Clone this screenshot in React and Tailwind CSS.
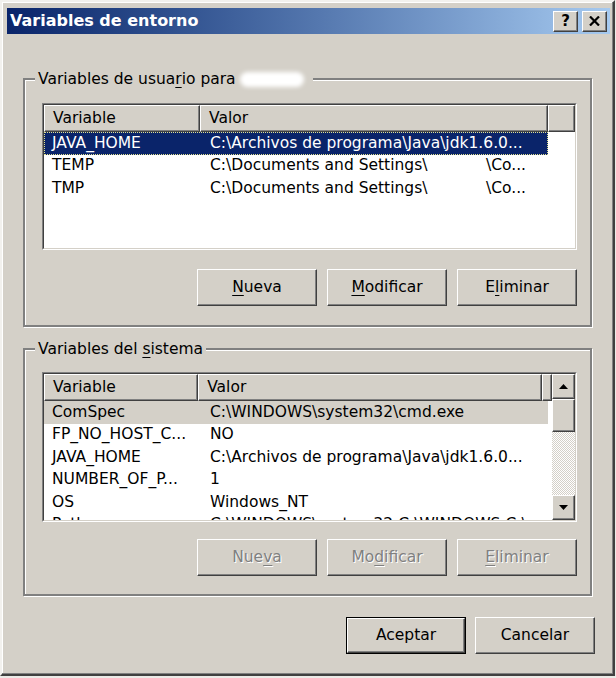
function Raised({ className = "", children }) {
  return (
    <div className={"flex items-center justify-center bg-[#d4d0c8] border-t border-l border-t-white border-l-white border-r border-b border-r-[#404040] border-b-[#404040] shadow-[inset_-1px_-1px_0_#808080] " + className}>
      {children}
    </div>
  );
}

function Button({ children, disabled, primary }) {
  const label = (
    <Raised className="w-full h-full">
      <span className={disabled ? "text-[#808080] [text-shadow:1px_1px_0_#ffffff]" : ""}>{children}</span>
    </Raised>
  );
  if (primary) {
    return <div className="w-[120px] h-[37px] border border-black">{label}</div>;
  }
  return <div className="w-[120px] h-[37px]">{label}</div>;
}

function Key({ children }) {
  return <u className="underline underline-offset-[3px] decoration-1">{children}</u>;
}

function HeaderCell({ className = "", children }) {
  return (
    <div className={"h-full flex items-center pl-[8px] bg-[#d4d0c8] border-t border-l border-t-white border-l-white border-r border-b border-r-[#404040] border-b-[#404040] shadow-[inset_-1px_-1px_0_#808080] " + className}>
      {children}
    </div>
  );
}

function Row({ name, value, state }) {
  let cls = "text-black";
  if (state === "selected") cls = "bg-[#0a246a] text-white outline-1 outline-dotted outline-[#e0e090] -outline-offset-1";
  if (state === "inactive") cls = "bg-[#d4d0c8] text-black";
  return (
    <div className={"flex w-[504px] h-[22.5px] items-center whitespace-nowrap " + cls}>
      <div className="w-[156px] pl-[8px] overflow-hidden">{name}</div>
      <div className="flex-1 pl-[10px] overflow-hidden">{value}</div>
    </div>
  );
}

function Sunken({ className = "", children }) {
  return (
    <div className={"border-t border-l border-t-[#808080] border-l-[#808080] border-r border-b border-r-white border-b-white " + className}>
      <div className="h-full border-t border-l border-t-[#404040] border-l-[#404040] border-r border-b border-r-[#d4d0c8] border-b-[#d4d0c8] bg-white overflow-hidden">
        {children}
      </div>
    </div>
  );
}

function Arrow({ up }) {
  return (
    <svg width="9" height="5" viewBox="0 0 9 5">
      {up ? <polygon points="0,5 9,5 4.5,0" fill="#000" /> : <polygon points="0,0 9,0 4.5,5" fill="#000" />}
    </svg>
  );
}

function Documents({ tail }) {
  return (
    <span className="flex">
      <span className="inline-block w-[276px]">C:\Documents and Settings\</span>
      <span>{tail}</span>
    </span>
  );
}

function Group({ legend, children, className = "" }) {
  return (
    <fieldset className={"m-0 p-0 min-w-0 border-2 border-[#808080] shadow-[inset_1px_1px_0_#ffffff,1px_1px_0_#ffffff] " + className}>
      <legend className="ml-[10px] px-[3px] leading-[18px] bg-[#d4d0c8]">{legend}</legend>
      {children}
    </fieldset>
  );
}

export default function App() {
  return (
    <div className="w-[616px] h-[678px] bg-[#ecebe7] font-['DejaVu_Sans',sans-serif] text-[15.5px] text-black">
      <div className="w-[615px] h-[676px] flex flex-col bg-[#d4d0c8] border-2 border-t-[#f2f1ee] border-l-[#f2f1ee] border-r-[#404040] border-b-[#404040] shadow-[inset_-1px_-1px_0_#808080,inset_1px_1px_0_#ffffff] pt-[6px] pl-[5px] pr-[3px]">
        {/* title bar */}
        <div className="h-[26px] flex items-center bg-gradient-to-r from-[#0a246a] to-[#a6caf0] pl-[3px] pr-[3px]">
          <span className="text-white font-bold text-[16px]">Variables de entorno</span>
          <div className="ml-auto flex gap-[4px]">
            <Raised className="w-[25px] h-[21px]">
              <span className="font-bold text-[15px] leading-none">?</span>
            </Raised>
            <Raised className="w-[25px] h-[21px]">
              <svg width="11" height="10" viewBox="0 0 11 10">
                <path d="M1 0.5 L10 9.5 M10 0.5 L1 9.5" stroke="#000" strokeWidth="2.2" />
              </svg>
            </Raised>
          </div>
        </div>

        <div className="flex flex-col pl-[16px] pr-[18px]">
          <Group
            className="mt-[36px]"
            legend={
              <span className="flex items-center">
                Variables de usua<Key>r</Key>io para
                <span className="inline-block w-[64px] h-[15px] ml-[4px] mr-[6px] bg-white rounded-full blur-[2px]" />
              </span>
            }
          >
            <div className="pl-[17px] pr-[13px] pb-[19px] pt-[15px]">
              <Sunken className="h-[147px]">
                <div className="flex h-[27px]">
                  <HeaderCell className="w-[156px]">Variable</HeaderCell>
                  <HeaderCell className="w-[348px]">Valor</HeaderCell>
                  <HeaderCell className="flex-1" />
                </div>
                <Row name="JAVA_HOME" value="C:\Archivos de programa\Java\jdk1.6.0..." state="selected" />
                <Row name="TEMP" value={<Documents tail="\Co..." />} />
                <Row name="TMP" value={<Documents tail="\Co..." />} />
              </Sunken>
              <div className="flex justify-end gap-[10px] mt-[19px]">
                <Button><Key>N</Key>ueva</Button>
                <Button><Key>M</Key>odificar</Button>
                <Button>E<Key>l</Key>iminar</Button>
              </div>
            </div>
          </Group>

          <Group className="mt-[13px]" legend={<span>Variables del <Key>s</Key>istema</span>}>
            <div className="pl-[17px] pr-[13px] pb-[18px] pt-[14px]">
              <Sunken className="h-[150px]">
                <div className="flex h-full">
                  <div className="flex-1 overflow-hidden">
                    <div className="flex h-[27px]">
                      <HeaderCell className="w-[156px]">Variable</HeaderCell>
                      <HeaderCell className="w-[348px]">Valor</HeaderCell>
                      <HeaderCell className="flex-1" />
                    </div>
                    <Row name="ComSpec" value="C:\WINDOWS\system32\cmd.exe" state="inactive" />
                    <Row name="FP_NO_HOST_C..." value="NO" />
                    <Row name="JAVA_HOME" value="C:\Archivos de programa\Java\jdk1.6.0..." />
                    <Row name="NUMBER_OF_P..." value="1" />
                    <Row name="OS" value="Windows_NT" />
                    <Row name="Path" value="C:\WINDOWS\system32;C:\WINDOWS;C:\..." />
                  </div>
                  <div className="w-[23px] flex flex-col">
                    <Raised className="h-[25px]"><Arrow up /></Raised>
                    <Raised className="h-[33px]" />
                    <div className="flex-1 bg-[repeating-conic-gradient(#ffffff_0%_25%,#d4d0c8_0%_50%)] bg-size-[2px_2px]" />
                    <Raised className="h-[25px]"><Arrow /></Raised>
                  </div>
                </div>
              </Sunken>
              <div className="flex justify-end gap-[10px] mt-[17px]">
                <Button disabled>Nue<Key>v</Key>a</Button>
                <Button disabled>Mo<Key>d</Key>ificar</Button>
                <Button disabled><Key>E</Key>liminar</Button>
              </div>
            </div>
          </Group>

          <div className="flex justify-end gap-[9px] mt-[21px] mr-[-3px]">
            <Button primary>Aceptar</Button>
            <Button>Cancelar</Button>
          </div>
        </div>
      </div>
    </div>
  );
}
